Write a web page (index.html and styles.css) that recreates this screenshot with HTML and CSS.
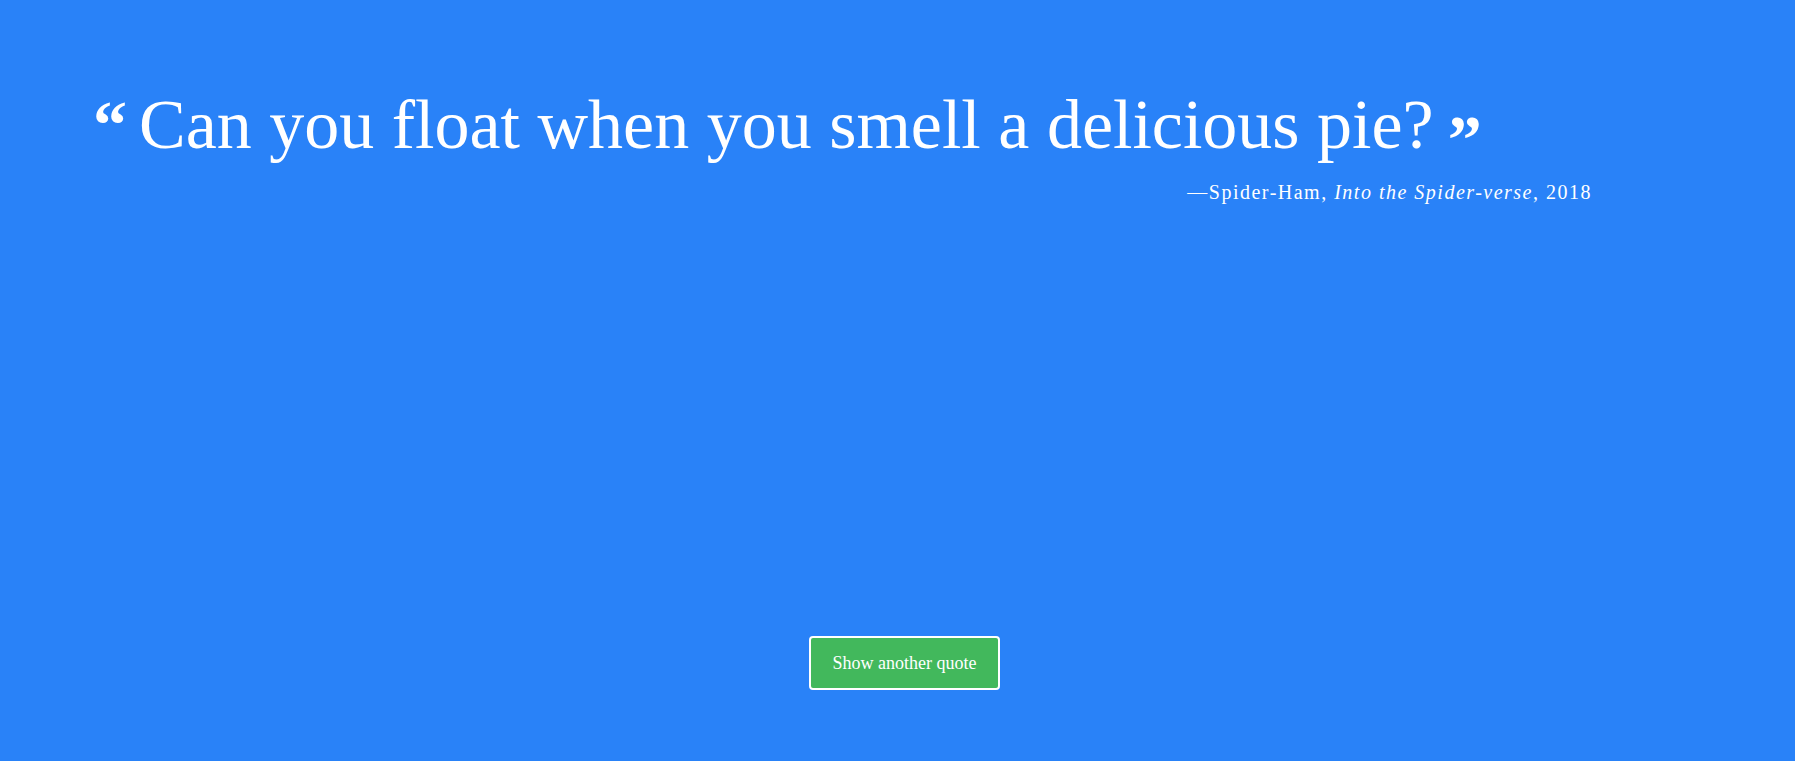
FILE: index.html
```html
<!DOCTYPE html>
<html lang="en">
<head>
<meta charset="utf-8">
<title>Quote</title>
<link rel="stylesheet" href="styles.css">
</head>
<body>
<main class="page">
  <section class="quote-box">
    <h1 class="quote"><span class="mark open">&ldquo;</span>Can you float when you smell a delicious pie?<span class="mark close">&rdquo;</span></h1>
    <p class="author">—Spider-Ham, <em>Into the Spider-verse</em>, 2018</p>
  </section>
  <div class="actions">
    <button class="btn">Show another quote</button>
  </div>
</main>
</body>
</html>
```

FILE: styles.css
```css
html, body {
  margin: 0;
  padding: 0;
  height: 100%;
}
body {
  background: #2982f8;
  color: #fff;
  font-family: "Liberation Serif", "Times New Roman", serif;
}
.page {
  height: 100%;
  display: flex;
  flex-direction: column;
  box-sizing: border-box;
  padding-top: 80px;
}
.quote-box {
  display: flex;
  flex-direction: column;
  padding: 0 203px 0 93px;
}
.quote {
  margin: 0;
  font-weight: 400;
  font-size: 70px;
  line-height: 90px;
  white-space: nowrap;
}
.mark {
  font-weight: 700;
  font-size: 68px;
}
.open {
  margin-right: 12px;
}
.close {
  margin-left: 14px;
  vertical-align: -14px;
}
.author {
  margin: -3px 0 0;
  align-self: flex-end;
  font-size: 20px;
  letter-spacing: 1.5px;
}
.actions {
  display: flex;
  justify-content: center;
  margin-top: auto;
  margin-bottom: 71px;
  padding-left: 14px;
}
.btn {
  width: 191px;
  height: 54px;
  background: #42b85c;
  color: #fff;
  border: 2px solid #fff;
  border-radius: 4px;
  font-family: "Liberation Serif", "Times New Roman", serif;
  font-size: 18px;
  cursor: pointer;
}
```
